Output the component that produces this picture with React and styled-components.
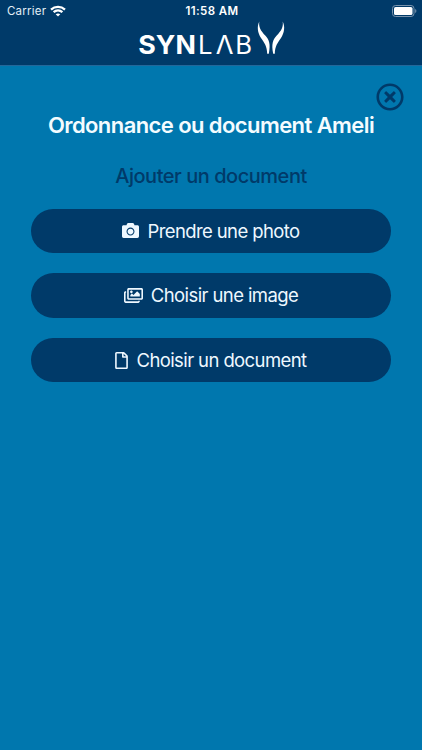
import React from 'react';
import styled, { createGlobalStyle } from 'styled-components';
import {
  FaCamera,
  FaRegImages,
  FaRegFile,
  FaRegTimesCircle,
} from 'react-icons/fa';

const GlobalStyle = createGlobalStyle`
  * {
    box-sizing: border-box;
  }

  body {
    margin: 0;
    background: #0077ae;
    font-family: Inter, 'Liberation Sans', sans-serif;
  }
`;

const Screen = styled.div`
  display: flex;
  flex-direction: column;
  height: 750px;
  overflow: hidden;
  background: #0077ae;
`;

const Header = styled.header`
  height: 66px;
  background: #003a69;
  border-bottom: 1px solid #24679a;
`;

const StatusBar = styled.div`
  display: grid;
  grid-template-columns: 1fr auto 1fr;
  align-items: center;
  height: 21px;
  padding: 0 5px 0 7px;
  color: #fff;
`;

const Network = styled.div`
  display: flex;
  align-items: center;
  gap: 4px;
  font-size: 11.5px;
  letter-spacing: 0.22px;
  color: #e2eef6;
`;

const Time = styled.div`
  font-size: 11.5px;
  font-weight: 600;
  letter-spacing: 0.4px;
`;

const Battery = styled.svg`
  justify-self: end;
`;

const Logo = styled.svg`
  display: block;
  margin: 0 auto;
  overflow: visible;
  fill: #fff;
  font-family: Inter, sans-serif;
  font-size: 25.7px;
`;

const Content = styled.main`
  display: flex;
  flex-direction: column;
  padding: 17px 31px 0;
`;

const CloseButton = styled.button`
  align-self: flex-end;
  display: flex;
  margin-right: -13px;
  padding: 0;
  border: none;
  background: none;
  color: #003a69;
  font-size: 28px;
`;

const Title = styled.h1`
  margin: 0;
  text-align: center;
  white-space: nowrap;
  font-size: 22px;
  line-height: 28px;
  font-weight: 600;
  letter-spacing: -0.58px;
  color: #f4fcff;
`;

const Subtitle = styled.h2`
  margin: 24px 0 19.5px;
  text-align: center;
  font-size: 20px;
  line-height: 26px;
  font-weight: 500;
  letter-spacing: -0.47px;
  color: #003a69;
`;

const Actions = styled.div`
  display: flex;
  flex-direction: column;
  gap: 20.5px;
`;

const ActionButton = styled.button`
  display: flex;
  align-items: center;
  justify-content: center;
  gap: 8px;
  height: 44.3px;
  padding: 0;
  border: none;
  border-radius: 23px;
  background: #003a69;
  color: #eef8ff;
  font-family: inherit;
  font-size: 18.5px;
  letter-spacing: -0.6px;

  svg {
    flex: none;
    width: ${({ $iconWidth }) => $iconWidth}px;
    height: 17px;
  }
`;

const actions = [
  { label: 'Prendre une photo', Icon: FaCamera, iconWidth: 17 },
  { label: 'Choisir une image', Icon: FaRegImages, iconWidth: 19 },
  { label: 'Choisir un document', Icon: FaRegFile, iconWidth: 13 },
];

const Wifi = () => (
  <svg width="16" height="12" viewBox="0 0 16 12" fill="none" stroke="#fff" strokeWidth="2.3">
    <path d="M1 4.600C5 .9 11 .9 15 4.600" />
    <path d="M3.600 7.200c2.600-2.300 6.200-2.300 8.800 0" />
    <path d="M8 11.600 5.700 9.300c1.300-1.200 3.300-1.200 4.600 0z" fill="#fff" stroke="none" />
  </svg>
);

const BatteryIcon = () => (
  <Battery width="25" height="12" viewBox="0 0 25 12">
    <rect x="0.5" y="0.5" width="21.5" height="11" rx="3" fill="none" stroke="#7893ad" />
    <rect x="2" y="2" width="18.5" height="8" rx="1.6" fill="#fff" />
    <path d="M23.200 4v4c1.600-.6 1.600-3.400 0-4z" fill="#7893ad" />
  </Battery>
);

const horn = 'M121.300.5C118.800 5.500 119.500 11.500 123 17c3.500 5 6 8 6.200 15.800h1.600c2-9.800.2-14.300-3.300-18C122.500 9.500 120.500 6 121.300.5z';

const SynlabLogo = () => (
  <Logo width="146" height="36" viewBox="0 0 146 36">
    <text x="0.3" y="32.8" fontWeight="700" textLength="57.5" lengthAdjust="spacingAndGlyphs">SYN</text>
    <text x="60 77.700 97.300" y="32.800" fontWeight="400">LΛB</text>
    <path d={horn} />
    <path d={horn} transform="translate(266 0) scale(-1 1)" />
  </Logo>
);

const App = () => (
  <>
    <GlobalStyle />
    <Screen>
      <Header>
        <StatusBar>
          <Network>
            Carrier
            <Wifi />
          </Network>
          <Time>11:58 AM</Time>
          <BatteryIcon />
        </StatusBar>
        <SynlabLogo />
      </Header>
      <Content>
        <CloseButton type="button" aria-label="Fermer">
          <FaRegTimesCircle />
        </CloseButton>
        <Title>Ordonnance ou document Ameli</Title>
        <Subtitle>Ajouter un document</Subtitle>
        <Actions>
          {actions.map(({ label, Icon, iconWidth }) => (
            <ActionButton key={label} type="button" $iconWidth={iconWidth}>
              <Icon />
              {label}
            </ActionButton>
          ))}
        </Actions>
      </Content>
    </Screen>
  </>
);

export default App;
